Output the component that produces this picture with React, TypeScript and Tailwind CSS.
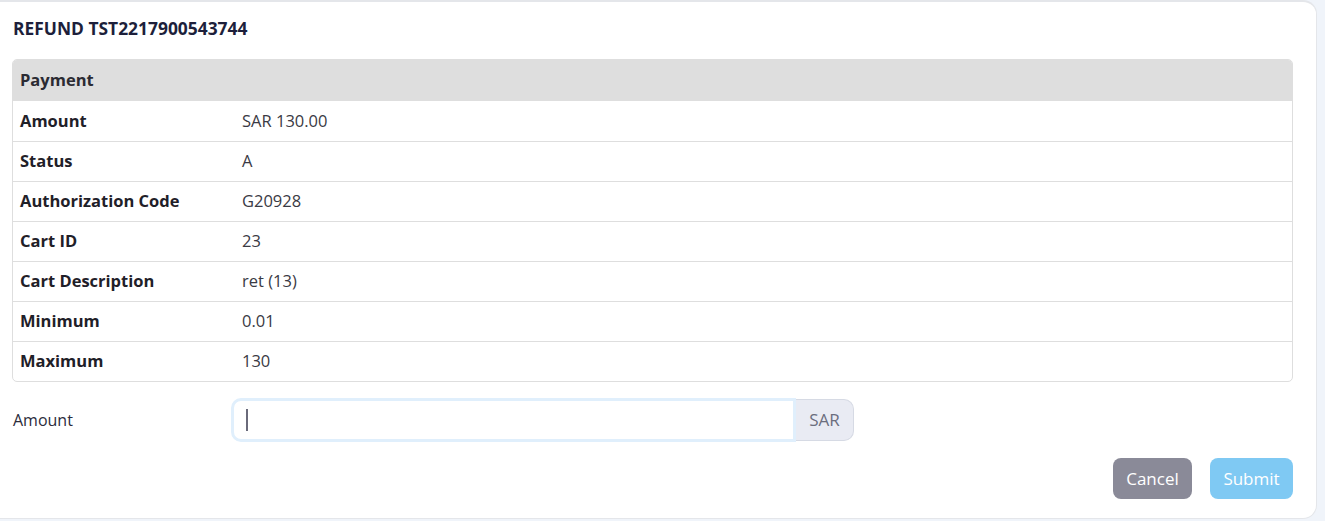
import { useState } from 'react'

const rows = [
  { label: 'Amount', value: 'SAR 130.00' },
  { label: 'Status', value: 'A' },
  { label: 'Authorization Code', value: 'G20928' },
  { label: 'Cart ID', value: '23' },
  { label: 'Cart Description', value: 'ret (13)' },
  { label: 'Minimum', value: '0.01' },
  { label: 'Maximum', value: '130' }
]

export default function App() {
  const [amount, setAmount] = useState('')

  return (
    <div
      className="flex h-[521px] w-full bg-[#f0f4fa] text-[#212529]"
      style={{ fontFamily: '"Open Sans", "Noto Sans", sans-serif' }}
    >
      <div className="flex h-[519px] w-[1317px] flex-col rounded-r-[14px] border-t-2 border-r border-b border-[#e4e6ea] bg-white">
        {/* Title */}
        <h2 className="px-[13px] pt-[15px] text-[17.4px] font-bold leading-[22px] text-[#1d1f3b]">
          REFUND TST2217900543744
        </h2>

        {/* Payment table */}
        <div className="mt-[20px] ml-[12px] w-[1281px] overflow-hidden rounded-[5px] border border-[#dedede]">
          <div className="flex h-[41px] items-center bg-[#dedede] px-[7px] text-[16.5px] font-bold text-[#2b2b33]">
            Payment
          </div>
          {rows.map((row, i) => (
            <div
              key={row.label}
              className={`flex h-[40px] items-center px-[7px] ${
                i > 0 ? 'border-t border-[#dedede]' : ''
              }`}
            >
              <div className="w-[222px] text-[16.5px] font-bold text-[#1f2028]">
                {row.label}
              </div>
              <div className="text-[16.5px] text-[#3a3a44]">{row.value}</div>
            </div>
          ))}
        </div>

        {/* Amount input */}
        <div className="mt-[16px] flex items-center pl-[13px]">
          <label className="w-[218px] text-[16px] text-[#2b2b3b]">Amount</label>
          <div className="flex h-[44px] items-stretch">
            <div className="relative">
              <input
                autoFocus
                value={amount}
                onChange={(e) => setAmount(e.target.value)}
                className="h-full w-[565px] rounded-l-[10px] border-[3px] border-[#e0effc] bg-white px-[12px] text-[18px] text-[#4a4a5a] caret-[#5a5a6a] outline-none"
              />
              {amount === '' && (
                <span className="pointer-events-none absolute top-[11px] left-[15px] h-[22px] w-[2px] bg-[#6a6a7a]" />
              )}
            </div>
            <span className="my-[1px] flex w-[58px] items-center justify-center rounded-r-[10px] border border-l-0 border-[#d6dae4] bg-[#e9ebf3] text-[17px] text-[#6b6e7e]">
              SAR
            </span>
          </div>
        </div>

        {/* Actions */}
        <div className="mt-[16px] flex justify-end gap-[18px] pr-[23px]">
          <button className="h-[41px] w-[79px] rounded-[8px] bg-[#8a8a98] text-[17px] text-white">
            Cancel
          </button>
          <button
            disabled
            className="h-[41px] w-[83px] rounded-[8px] bg-[#7fc9f3] text-[17px] text-white"
          >
            Submit
          </button>
        </div>
      </div>
    </div>
  )
}
